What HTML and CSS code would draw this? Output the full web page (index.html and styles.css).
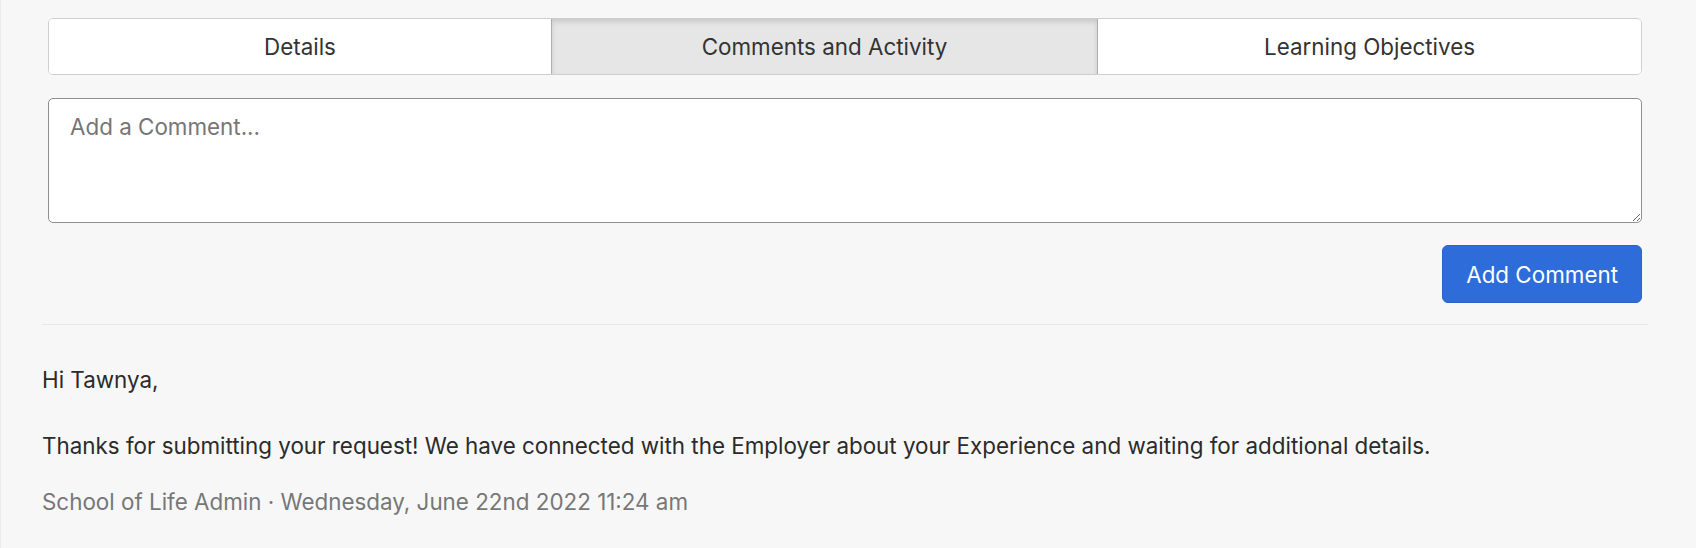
FILE: index.html
```html
<!DOCTYPE html>
<html lang="en">
<head>
<meta charset="utf-8">
<title>Comments and Activity</title>
<link rel="stylesheet" href="styles.css">
</head>
<body>
<div class="page">
  <div class="tabs">
    <button class="tab">Details</button>
    <button class="tab active">Comments and Activity</button>
    <button class="tab">Learning Objectives</button>
  </div>
  <div class="composer">
    <textarea class="comment-box" placeholder="Add a Comment..."></textarea>
    <div class="actions">
      <button class="btn-primary">Add Comment</button>
    </div>
  </div>
  <hr class="divider">
  <div class="comment">
    <p class="comment-text">Hi Tawnya,</p>
    <p class="comment-text">Thanks for submitting your request! We have connected with the Employer about your Experience and waiting for additional details.</p>
    <p class="comment-meta">School of Life Admin · Wednesday, June 22nd 2022 11:24 am</p>
  </div>
</div>
</body>
</html>
```
FILE: styles.css
```css
html, body {
  margin: 0;
  padding: 0;
  background: #f7f7f7;
}
body {
  font-family: Inter, "Noto Sans", "Liberation Sans", sans-serif;
  color: #2b2b2b;
  height: 548px;
  box-sizing: border-box;
  border-left: 1px solid #ebebeb;
}
.page {
  padding: 18px 48px 0 41px;
}
.tabs {
  display: grid;
  grid-template-columns: 465fr 507fr 503fr;
  margin: 0 6px 0 6px;
  height: 57px;
  border: 1px solid #cfcfcf;
  border-radius: 5px;
  background: #fff;
  overflow: hidden;
  box-sizing: border-box;
}
.tab {
  font-family: inherit;
  font-size: 22.4px;
  color: #333;
  background: #fff;
  border: 0;
  margin: 0;
  padding: 0;
}
.tab.active {
  background: #e6e6e6;
  border: 1px solid #adadad;
  box-shadow: inset 0 3px 5px rgba(0,0,0,0.125);
  margin: -1px 0;
}
.composer {
  margin: 23px 6px 0 6px;
}
.comment-box {
  display: block;
  width: 100%;
  height: 125px;
  box-sizing: border-box;
  border: 1px solid #8f8f8f;
  border-radius: 5px;
  background: #fff;
  padding: 13px 21px;
  font-family: inherit;
  font-size: 22.4px;
  line-height: 30px;
  color: #333;
  resize: vertical;
}
.comment-box::placeholder {
  color: #767676;
}
.actions {
  display: flex;
  justify-content: flex-end;
  margin-top: 22px;
}
.btn-primary {
  font-family: inherit;
  font-size: 22.4px;
  color: #fff;
  background: #2e6cd9;
  border: 1px solid #2a63c9;
  border-radius: 6px;
  height: 58px;
  padding: 0 23px;
}
.divider {
  border: 0;
  border-top: 1px solid #e8e8e8;
  margin: 21px 0 0 0;
}
.comment {
  padding-top: 40px;
}
.comment-text {
  margin: 0 0 36px 0;
  font-size: 22.4px;
  line-height: 30px;
  color: #2b2b2b;
}
.comment-text + .comment-text {
  margin-bottom: 26px;
}
.comment-meta {
  margin: 0;
  font-size: 22.4px;
  line-height: 30px;
  color: #777;
}
```
